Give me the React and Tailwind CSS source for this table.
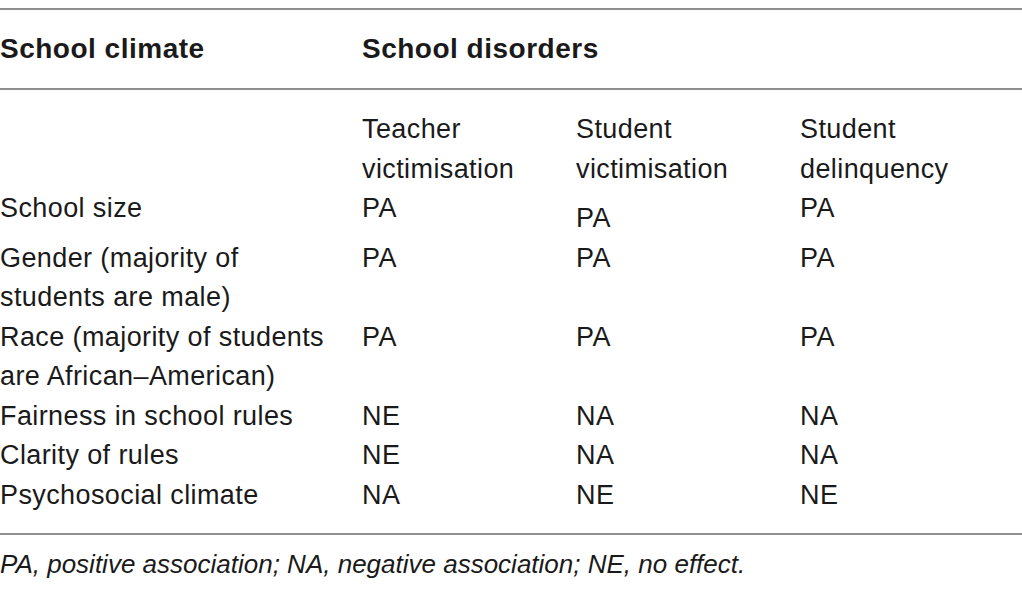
import React from 'react';

const rows = [
  { label: ['School size'], cells: ['PA', 'PA', 'PA'], offset: true },
  { label: ['Gender (majority of', 'students are male)'], cells: ['PA', 'PA', 'PA'] },
  { label: ['Race (majority of students', 'are African–American)'], cells: ['PA', 'PA', 'PA'] },
  { label: ['Fairness in school rules'], cells: ['NE', 'NA', 'NA'] },
  { label: ['Clarity of rules'], cells: ['NE', 'NA', 'NA'] },
  { label: ['Psychosocial climate'], cells: ['NA', 'NE', 'NE'] },
];

const App = () => {
  return (
    <div
      className="w-[1022px] h-[592px] bg-white text-[#1a1a1a] pt-[8px] overflow-hidden"
      style={{ fontFamily: '"Liberation Sans", Arial, sans-serif' }}
    >
      <div className="grid grid-cols-[362px_214px_224px_1fr] items-center h-[82px] border-t-2 border-b-2 border-[#8f8f8f] text-[28px] font-bold tracking-[0.5px]">
        <div>School climate</div>
        <div className="col-span-3">School disorders</div>
      </div>

      <div className="pt-[20px] pb-[18px] text-[27px] tracking-[0.4px] leading-[39.5px] border-b-2 border-[#8f8f8f]">
        <div className="grid grid-cols-[362px_214px_224px_1fr]">
          <div></div>
          <div>Teacher<br />victimisation</div>
          <div>Student<br />victimisation</div>
          <div>Student<br />delinquency</div>
        </div>
        {rows.map((row, i) => (
          <div key={i} className="grid grid-cols-[362px_214px_224px_1fr]">
            <div>
              {row.label.map((l, j) => (
                <div key={j}>{l}</div>
              ))}
            </div>
            <div>{row.cells[0]}</div>
            <div className={row.offset ? 'pt-[10px]' : ''}>{row.cells[1]}</div>
            <div>{row.cells[2]}</div>
          </div>
        ))}
      </div>

      <div className="pt-[10px] text-[26px] italic">
        PA, positive association; NA, negative association; NE, no effect.
      </div>
    </div>
  );
};

export default App;
